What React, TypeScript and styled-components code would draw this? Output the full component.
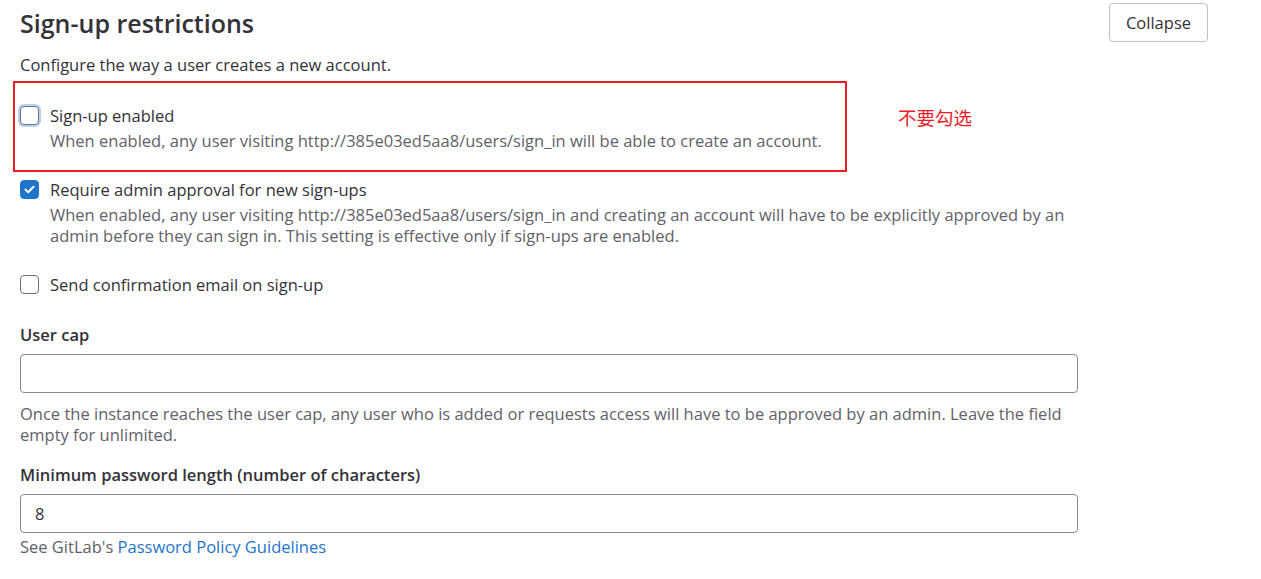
import styled, { createGlobalStyle } from "styled-components";

const Global = createGlobalStyle`
  body {
    margin: 0;
    background: #fff;
    font-family: "Open Sans", "Noto Sans", "Noto Sans CJK SC", sans-serif;
    color: #333238;
  }
`;

const Page = styled.div`
  width: 1208px;
  padding: 3px 0 0 20px;
  box-sizing: border-box;
`;

const Header = styled.div`
  display: flex;
  justify-content: space-between;
  align-items: flex-start;
`;

const Title = styled.h3`
  margin: 5px 0 0;
  font-size: 25px;
  font-weight: 600;
  line-height: 30px;
  color: #333238;
`;

const Button = styled.button`
  width: 99px;
  height: 39px;
  border: 1px solid #bfbfc3;
  border-radius: 4px;
  background: #fff;
  font-family: inherit;
  font-size: 16.5px;
  color: #333238;
`;

const Lead = styled.p`
  margin: 12px 0 0;
  font-size: 16.5px;
  line-height: 21px;
`;

const Body = styled.div`
  width: 1058px;
`;

const Annotated = styled.div`
  position: relative;
  margin-top: 30px;
`;

const RedBox = styled.div`
  position: absolute;
  left: -7px;
  top: -24px;
  width: 834px;
  height: 91px;
  border: 2px solid #ec1c24;
  box-sizing: border-box;
  pointer-events: none;
`;

const Note = styled.span`
  position: absolute;
  left: 878px;
  top: 0px;
  font-family: "Noto Sans CJK SC", sans-serif;
  font-size: 18.5px;
  line-height: 24px;
  color: #ec1c24;
`;

const CheckRow = styled.label<{ $gap?: number }>`
  display: flex;
  gap: 11px;
  margin-top: ${(p) => p.$gap ?? 0}px;
`;

const Box = styled.span<{ $checked?: boolean; $focus?: boolean }>`
  flex: none;
  width: 19px;
  height: 19px;
  margin-top: 1px;
  box-sizing: border-box;
  border-radius: 4px;
  border: 1px solid ${(p) => (p.$checked ? "#1f75cb" : "#737278")};
  background: ${(p) => (p.$checked ? "#1f75cb" : "#fff")};
  box-shadow: ${(p) => (p.$focus ? "0 0 0 2px #b5d3f5" : "none")};
  display: flex;
  align-items: center;
  justify-content: center;
`;

const Text = styled.div`
  display: flex;
  flex-direction: column;
`;

const Label = styled.span`
  font-size: 16.5px;
  line-height: 21px;
  color: #333238;
`;

const Help = styled.span`
  margin-top: 4px;
  font-size: 16.5px;
  line-height: 21px;
  color: #626168;
`;

const Field = styled.div<{ $gap: number }>`
  margin-top: ${(p) => p.$gap}px;
`;

const FieldLabel = styled.div`
  font-size: 16.5px;
  font-weight: 600;
  line-height: 21px;
  color: #333238;
`;

const Input = styled.div`
  margin-top: 9px;
  height: 39px;
  box-sizing: border-box;
  border: 1px solid #89888d;
  border-radius: 4px;
  padding: 0 14px;
  display: flex;
  align-items: center;
  font-size: 16.5px;
  color: #333238;
`;

const FieldHelp = styled.div<{ $gap: number }>`
  margin-top: ${(p) => p.$gap}px;
  font-size: 16.5px;
  line-height: 21px;
  color: #626168;
`;

const Link = styled.a`
  color: #1f75cb;
  text-decoration: none;
`;

const Check = () => (
  <svg width="11" height="9" viewBox="0 0 11 9">
    <path d="M1.5 4.6 4.2 7.2 9.5 1.8" fill="none" stroke="#fff" strokeWidth="2" strokeLinecap="round" strokeLinejoin="round" />
  </svg>
);

export default function App() {
  return (
    <Page>
      <Global />
      <Header>
        <Title>Sign-up restrictions</Title>
        <Button>Collapse</Button>
      </Header>
      <Body>
        <Lead>Configure the way a user creates a new account.</Lead>
        <Annotated>
          <RedBox />
          <Note>不要勾选</Note>
          <CheckRow>
            <Box $focus />
            <Text>
              <Label>Sign-up enabled</Label>
              <Help>
                When enabled, any user visiting http://385e03ed5aa8/users/sign_in will be able to create an account.
              </Help>
            </Text>
          </CheckRow>
        </Annotated>
        <CheckRow $gap={28}>
          <Box $checked>
            <Check />
          </Box>
          <Text>
            <Label>Require admin approval for new sign-ups</Label>
            <Help>
              When enabled, any user visiting http://385e03ed5aa8/users/sign_in and creating an account will have to be
              explicitly approved by an admin before they can sign in. This setting is effective only if sign-ups are
              enabled.
            </Help>
          </Text>
        </CheckRow>
        <CheckRow $gap={28}>
          <Box />
          <Text>
            <Label>Send confirmation email on sign-up</Label>
          </Text>
        </CheckRow>
        <Field $gap={29}>
          <FieldLabel>User cap</FieldLabel>
          <Input />
          <FieldHelp $gap={10}>
            Once the instance reaches the user cap, any user who is added or requests access will have to be approved by
            an admin. Leave the field empty for unlimited.
          </FieldHelp>
        </Field>
        <Field $gap={19}>
          <FieldLabel>Minimum password length (number of characters)</FieldLabel>
          <Input>8</Input>
          <FieldHelp $gap={3}>
            See GitLab's <Link href="#">Password Policy Guidelines</Link>
          </FieldHelp>
        </Field>
      </Body>
    </Page>
  );
}
